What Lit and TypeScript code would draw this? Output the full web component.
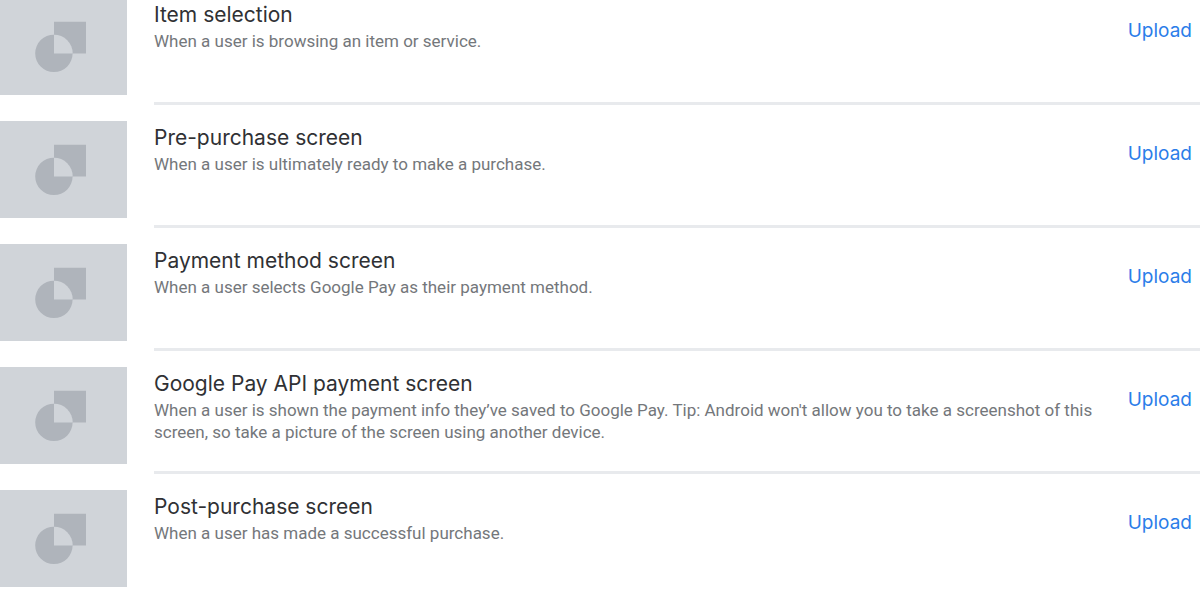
import { LitElement, html, css } from "lit";
import { customElement } from "lit/decorators.js";

interface Screen {
  title: string;
  description: string;
}

const screens: Screen[] = [
  { title: "Item selection", description: "When a user is browsing an item or service." },
  { title: "Pre-purchase screen", description: "When a user is ultimately ready to make a purchase." },
  { title: "Payment method screen", description: "When a user selects Google Pay as their payment method." },
  {
    title: "Google Pay API payment screen",
    description:
      "When a user is shown the payment info they’ve saved to Google Pay. Tip: Android won't allow you to take a screenshot of this screen, so take a picture of the screen using another device.",
  },
  { title: "Post-purchase screen", description: "When a user has made a successful purchase." },
];

@customElement("app-root")
export class AppRoot extends LitElement {
  static styles = css`
    :host {
      display: block;
      background: #fff;
      overflow: hidden;
    }
    .list {
      list-style: none;
      margin: 0;
      margin-top: -2px;
      padding: 0;
      display: grid;
      gap: 26px;
    }
    .row {
      display: flex;
      gap: 27px;
      height: 97px;
    }
    .thumb {
      flex: none;
      width: 127px;
      height: 97px;
      background: #d0d4d9;
    }
    .thumb svg {
      display: block;
    }
    .body {
      flex: 1;
      display: flex;
      box-sizing: border-box;
      height: 107px;
      border-bottom: 3px solid #e8eaed;
    }
    .row:last-child .body {
      border-bottom: 0;
    }
    .text {
      flex: 1;
      padding-top: 3px;
    }
    h2 {
      margin: 0 0 1px;
      font: 400 21px/28px "Google Sans", Inter, sans-serif;
      color: #303134;
    }
    p {
      margin: 0;
      font: 400 17px/22px Roboto, sans-serif;
      color: #74777b;
    }
    button {
      align-self: flex-start;
      margin: 19px 8px 0 20px;
      padding: 0;
      border: 0;
      background: none;
      font: 400 19px/28px "Google Sans", Inter, sans-serif;
      color: #2b7de9;
      cursor: pointer;
    }
  `;

  render() {
    return html`
      <ul class="list">
        ${screens.map(
          (s) => html`
            <li class="row">
              <div class="thumb">
                <svg width="127" height="97" viewBox="0 0 127 97" aria-hidden="true">
                  <path fill="#afb4bb" d="M54 23.7H86V55.4H72.6A18.7 18.7 0 1 1 54 36.7Z" />
                  <path fill="#d0d4d9" d="M54 36.7A18.7 18.7 0 0 1 72.7 55.4H54Z" />
                </svg>
              </div>
              <div class="body">
                <div class="text">
                  <h2>${s.title}</h2>
                  <p>${s.description}</p>
                </div>
                <button type="button" aria-label="Upload ${s.title}">Upload</button>
              </div>
            </li>
          `
        )}
      </ul>
    `;
  }
}
